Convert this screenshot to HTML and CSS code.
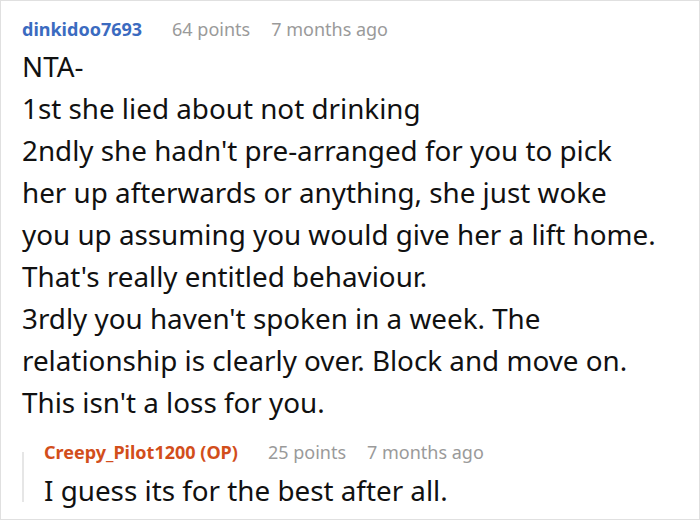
FILE: index.html
```html
<!DOCTYPE html>
<html>
<head>
<meta charset="utf-8">
<link rel="stylesheet" href="styles.css">
</head>
<body>
<div class="frame">
  <div class="comment">
    <div class="meta">
      <span class="author">dinkidoo7693</span>
      <span class="points">64 points</span>
      <span class="time">7 months ago</span>
    </div>
    <div class="text">
      <p>NTA-</p>
      <p>1st she lied about not drinking</p>
      <p>2ndly she hadn't pre-arranged for you to pick her up afterwards or anything, she just woke you up assuming you would give her a lift home. That's really entitled behaviour.</p>
      <p>3rdly you haven't spoken in a week. The relationship is clearly over. Block and move on. This isn't a loss for you.</p>
    </div>
    <div class="reply">
      <div class="rail"></div>
      <div class="reply-body">
        <div class="meta">
          <span class="author op">Creepy_Pilot1200 (OP)</span>
          <span class="points">25 points</span>
          <span class="time">7 months ago</span>
        </div>
        <div class="text reply-text">
          <p>I guess its for the best after all.</p>
        </div>
      </div>
    </div>
  </div>
</div>
</body>
</html>
```
FILE: styles.css
```css
html, body {
  margin: 0;
  padding: 0;
  background: #fff;
}
body {
  font-family: "Noto Sans", "Open Sans", sans-serif;
  color: #111;
}
.frame {
  width: 700px;
  height: 520px;
  box-sizing: border-box;
  border: 1px solid #e0e0e0;
  overflow: hidden;
}
.comment {
  padding: 12px 40px 0 21px;
}
.meta {
  display: flex;
  align-items: baseline;
  font-size: 18px;
  line-height: 32px;
  color: #9a9a9a;
  white-space: nowrap;
}
.author {
  font-weight: bold;
  color: #3b6bc0;
}
.author.op {
  color: #d24e1b;
}
.points {
  margin-left: 30px;
}
.time {
  margin-left: 21px;
}
.text {
  font-size: 27.8px;
  line-height: 42px;
}
.text p {
  margin: 0;
}
.reply {
  display: grid;
  grid-template-columns: 2px 1fr;
  column-gap: 20px;
  margin-top: 13px;
}
.rail {
  background: #e6e6e6;
  margin: 16px 0 9px;
}
.reply-text {
  margin-top: 1px;
}
```
